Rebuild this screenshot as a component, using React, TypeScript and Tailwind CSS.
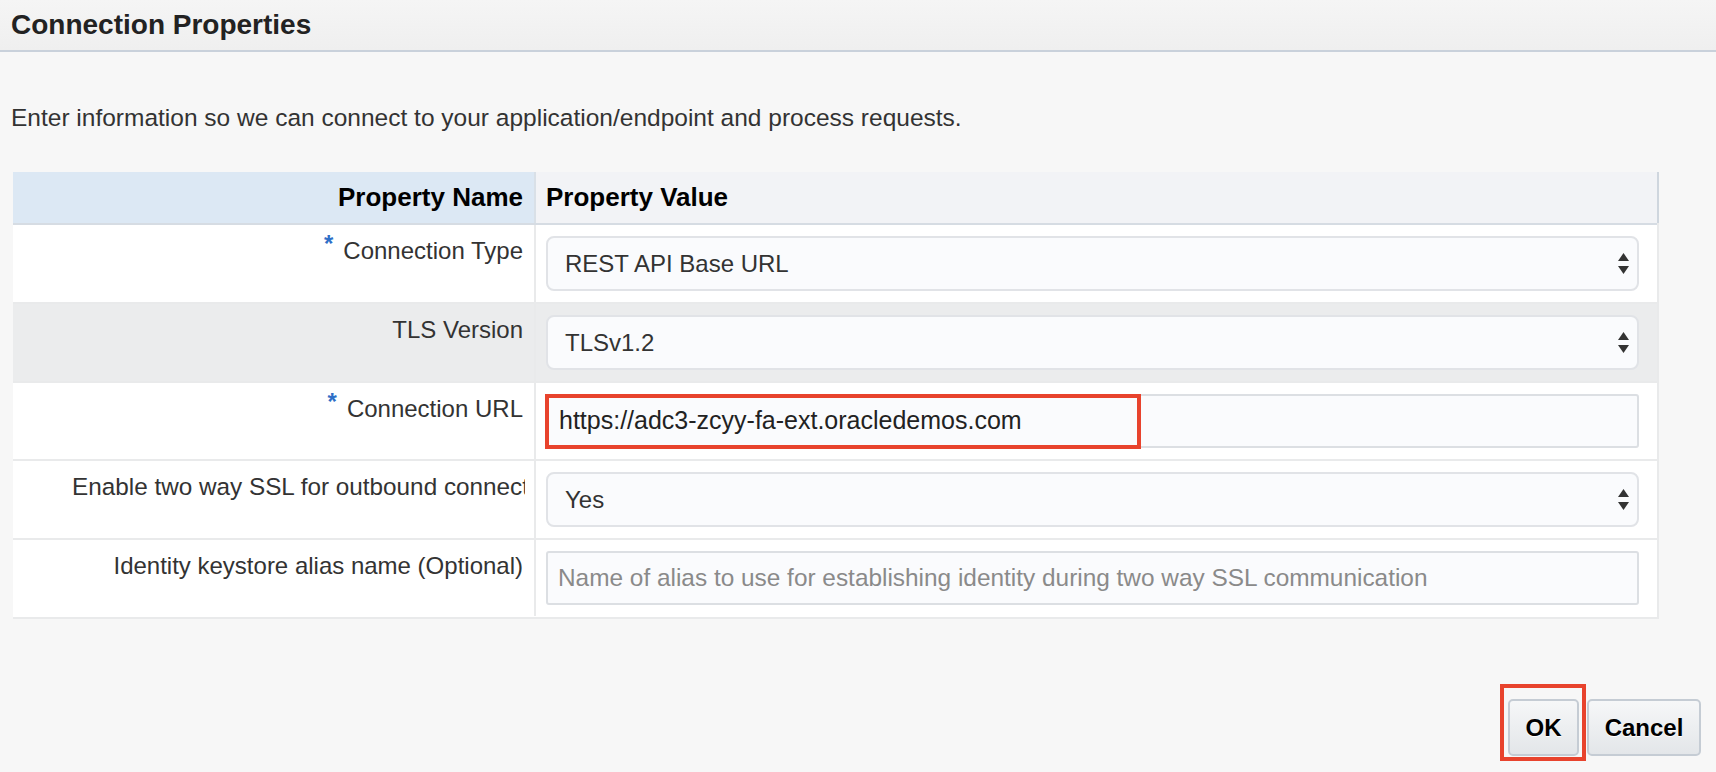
import React from 'react'

const Arrows = () => (
    <svg width="11" height="22" viewBox="0 0 11 22" className="shrink-0">
        <path d="M5.5 0 L11 8 L0 8 Z" fill="#333" />
        <path d="M0 13 L11 13 L5.5 21 Z" fill="#333" />
    </svg>
)

const Req = () => (
    <span className="text-[#2f6fc7] font-bold relative -top-[7px] mr-[10px]">*</span>
)

const SelectBox = ({ value }: { value: string }) => (
    <div className="h-[55px] rounded-[8px] border-2 border-[#e1e3e7] bg-[#fafbfd] flex items-center justify-between pl-[17px] pr-[8px] text-[24px] text-[#333]">
        <span>{value}</span>
        <Arrows />
    </div>
)

const Row = ({ label, required, gray, clip, last, children }: { label: string; required?: boolean; gray?: boolean; clip?: boolean; last?: boolean; children: React.ReactNode }) => (
    <div className={`flex border-b-2 border-[#e9eaeb] ${gray ? 'bg-[#ebeced]' : 'bg-white'} ${last ? 'pb-[1px]' : ''}`}>
        <div className={`w-[523px] shrink-0 border-r-2 border-[#e9eaeb] pt-[12px] ${clip ? 'pr-[9px]' : 'pr-[11px]'} text-right text-[24px] leading-[28px] text-[#333] whitespace-nowrap flex justify-end`}>
            {clip ? (
                // label is longer than the column, it gets cut like in the original form
                <div className="w-[453px] overflow-hidden text-left text-[24.3px]">{label}</div>
            ) : (
                <span>
                    {required && <Req />}
                    {label}
                </span>
            )}
        </div>
        <div className="flex-1 pl-[10px] pr-[18px] py-[11px]">{children}</div>
    </div>
)

export default function App() {
    return (
        <div className="min-h-screen w-full bg-[#f7f7f7] font-['Liberation_Sans',Arial,sans-serif]">
            {/* Title bar */}
            <div className="h-[52px] border-b-2 border-[#c9d1db] bg-gradient-to-b from-[#f5f5f5] to-[#efefef] flex items-center px-[11px]">
                <h1 className="text-[28px] font-bold text-[#222]">Connection Properties</h1>
            </div>

            <p className="mt-[52px] px-[11px] text-[24.5px] leading-[28px] text-[#333]">
                Enter information so we can connect to your application/endpoint and process requests.
            </p>

            {/* Properties table */}
            <div className="ml-[13px] mt-[40px] w-[1646px] border-r-2 border-[#e9eaeb]">
                <div className="flex h-[53px] border-b-2 border-[#d6dce3] text-[26px] font-bold text-black">
                    <div className="w-[523px] shrink-0 bg-[#dce8f4] border-r-2 border-[#d9e0e7] flex items-center justify-end pr-[11px]">
                        Property Name
                    </div>
                    <div className="flex-1 bg-[#f2f3f6] flex items-center pl-[10px] border-r-2 border-[#cfd6de] -mr-[2px]">
                        Property Value
                    </div>
                </div>

                <Row label="Connection Type" required>
                    <SelectBox value="REST API Base URL" />
                </Row>
                <Row label="TLS Version" gray>
                    <SelectBox value="TLSv1.2" />
                </Row>
                <Row label="Connection URL" required>
                    <div className="relative">
                        <div className="h-[54px] rounded-[3px] border-2 border-[#dcdfe3] bg-[#fafbfd] flex items-center pl-[11px] text-[25px] text-[#222]">
                            https://adc3-zcyy-fa-ext.oracledemos.com
                        </div>
                        <div className="absolute -left-[1px] top-0 w-[596px] h-[55px] border-4 border-[#e8432d]" />
                    </div>
                </Row>
                <Row label="Enable two way SSL for outbound connection" clip>
                    <SelectBox value="Yes" />
                </Row>
                <Row label="Identity keystore alias name (Optional)" last>
                    <div className="h-[54px] rounded-[3px] border-2 border-[#dcdfe3] bg-[#fafbfd] flex items-center pl-[10px] text-[24.4px] text-[#8a8a8a]">
                        Name of alias to use for establishing identity during two way SSL communication
                    </div>
                </Row>
            </div>

            {/* Buttons */}
            <div className="mt-[80px] flex justify-end gap-[8px] pr-[15px]">
                <div className="relative">
                    <button className="h-[57px] w-[71px] rounded-[5px] border-2 border-[#c5ccd4] bg-gradient-to-b from-[#f6f7f8] to-[#e3e6e9] text-[24px] font-bold text-black [text-shadow:0_1px_0_#fff]">
                        OK
                    </button>
                    <div className="absolute -left-[8px] -top-[15px] w-[86px] h-[77px] border-4 border-[#e8432d]" />
                </div>
                <button className="h-[57px] w-[114px] rounded-[5px] border-2 border-[#c5ccd4] bg-gradient-to-b from-[#f6f7f8] to-[#e3e6e9] text-[24px] font-bold text-black [text-shadow:0_1px_0_#fff]">
                    Cancel
                </button>
            </div>
        </div>
    )
}
